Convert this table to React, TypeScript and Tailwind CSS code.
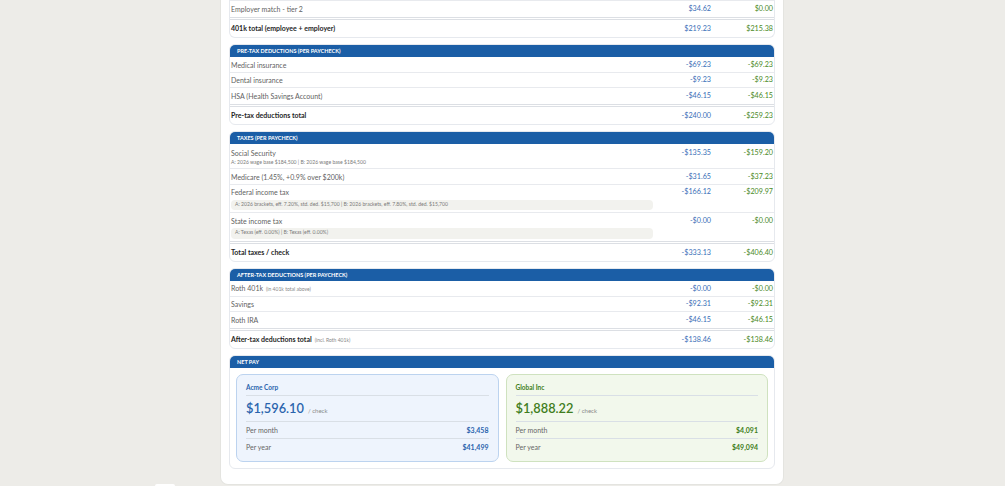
import React from "react";

const F = { fontFamily: 'Lato, "Open Sans", Arial, sans-serif' };

type Row = {
  label: string;
  small?: string;
  note?: string;
  pill?: string;
  a: string;
  b: string;
};

function Header({ title }: { title: string }) {
  return (
    <div className="h-[12.5px] bg-[#1b5ea6] rounded-t-[5px] flex items-center pl-[7px] pt-[0.5px] text-white font-bold text-[5.5px] uppercase">
      {title}
    </div>
  );
}

function Vals({ a, b, top }: { a: string; b: string; top?: boolean }) {
  return (
    <>
      <div className={`w-[59px] text-right text-[7.2px] leading-[10px] text-[#3a6fb7] pr-[2px] ${top ? "self-start" : ""}`}>{a}</div>
      <div className={`w-[61px] text-right text-[7.2px] leading-[10px] text-[#4a8a26] pr-[1px] ${top ? "self-start" : ""}`}>{b}</div>
    </>
  );
}

function DataRow({ r, last }: { r: Row; last?: boolean }) {
  const border = last ? "" : "border-b border-[#e8eaee]";
  if (r.note) {
    return (
      <div className={`flex pt-[4px] pb-[2px] ${border}`}>
        <div className="flex-1 min-w-0 pl-[1px]">
          <div className="text-[7px] leading-[10px] text-[#5f5f5f]">{r.label}</div>
          <div className="text-[5.1px] leading-[8px] text-[#7a7a7a]">{r.note}</div>
        </div>
        <Vals a={r.a} b={r.b} top />
      </div>
    );
  }
  if (r.pill) {
    return (
      <div className={`flex pt-[2.5px] pb-[2px] ${border}`}>
        <div className="flex-1 min-w-0 pl-[1px]">
          <div className="text-[7px] leading-[10px] text-[#5f5f5f]">{r.label}</div>
          <div className="mt-[2.5px] h-[10.5px] bg-[#f2f2ee] rounded-[4px] flex items-center pl-[4px] text-[5.1px] text-[#7a7a7a] mr-[1px]">
            {r.pill}
          </div>
        </div>
        <Vals a={r.a} b={r.b} top />
      </div>
    );
  }
  return (
    <div className={`flex items-center h-[15.5px] pt-[1px] ${border}`}>
      <div className="flex-1 min-w-0 pl-[1px] text-[7px] leading-[10px] text-[#5f5f5f]">
        {r.label}
        {r.small && <span className="text-[5px] text-[#888] ml-[3px]">{r.small}</span>}
      </div>
      <Vals a={r.a} b={r.b} />
    </div>
  );
}

function TotalRow({ label, small, a, b }: { label: string; small?: string; a: string; b: string }) {
  return (
    <div className="border-t-[3px] border-double border-[#dcdfe4] h-[20px] pt-[1px] flex items-center">
      <div className="flex-1 pl-[1px] text-[7px] font-bold text-[#262626]">
        {label}
        {small && <span className="text-[5px] font-normal text-[#888] ml-[3px]">{small}</span>}
      </div>
      <Vals a={a} b={b} />
    </div>
  );
}

function Section({
  title,
  rows,
  total,
}: {
  title: string;
  rows: Row[];
  total: { label: string; small?: string; a: string; b: string };
}) {
  return (
    <div className="border border-[#e6e9ee] rounded-[6px] bg-white">
      <Header title={title} />
      {rows.map((r, i) => (
        <DataRow key={i} r={r} last={i === rows.length - 1} />
      ))}
      <TotalRow {...total} />
    </div>
  );
}

function NetCard({
  name,
  amount,
  month,
  year,
  green,
}: {
  name: string;
  amount: string;
  month: string;
  year: string;
  green?: boolean;
}) {
  const c = green ? "text-[#3f7d20]" : "text-[#2a64ad]";
  return (
    <div
      className={`flex-1 rounded-[7px] border px-[9px] pt-[6px] pb-[6px] ${
        green ? "bg-[#f2f8ec] border-[#cfe2bf]" : "bg-[#eef4fd] border-[#bcd3ef]"
      }`}
    >
      <div className={`text-[6.5px] font-bold ${c} h-[15px] flex items-center border-b border-[#d9dfe6]`}>{name}</div>
      <div className="h-[26px] flex items-center border-b border-[#d9dfe6]">
        <span className={`text-[12.8px] font-semibold ${c}`}>{amount}</span>
        <span className="text-[6px] text-[#888] ml-[4px] mt-[3px]">/ check</span>
      </div>
      <div className="h-[16.5px] pt-[1px] flex items-center justify-between border-b border-[#d9dfe6] text-[7px]">
        <span className="text-[#666]">Per month</span>
        <span className={`font-bold ${c}`}>{month}</span>
      </div>
      <div className="h-[16.5px] pt-[1px] flex items-center justify-between text-[7px]">
        <span className="text-[#666]">Per year</span>
        <span className={`font-bold ${c}`}>{year}</span>
      </div>
    </div>
  );
}

export default function App() {
  return (
    <div style={F} className="w-[1005px] h-[486px] bg-[#edece8] overflow-hidden relative">
      <div className="absolute left-[155px] top-[484px] w-[20px] h-[4px] bg-white rounded-t-[2px]" />
      <div className="ml-[220px] w-[564px] h-[485px] bg-white rounded-b-[8px] border-x border-b border-[#e4e4e0] px-[8px]">
        {/* 401k section tail */}
        <div className="border-x border-b border-[#e6e9ee] rounded-b-[6px] bg-white">
          <div className="border-t border-[#e8eaee]">
            <div className="h-[15.5px] pt-[1px] flex items-center">
              <div className="flex-1 pl-[1px] text-[7px] text-[#5f5f5f]">Employer match - tier 2</div>
              <Vals a="$34.62" b="$0.00" />
            </div>
          </div>
          <TotalRow label="401k total (employee + employer)" a="$219.23" b="$215.38" />
        </div>

        <div className="flex flex-col gap-[6px] mt-[6px]">
          <Section
            title="Pre-tax deductions (per paycheck)"
            rows={[
              { label: "Medical insurance", a: "-$69.23", b: "-$69.23" },
              { label: "Dental insurance", a: "-$9.23", b: "-$9.23" },
              { label: "HSA (Health Savings Account)", a: "-$46.15", b: "-$46.15" },
            ]}
            total={{ label: "Pre-tax deductions total", a: "-$240.00", b: "-$259.23" }}
          />
          <Section
            title="Taxes (per paycheck)"
            rows={[
              {
                label: "Social Security",
                note: "A: 2026 wage base $184,500 | B: 2026 wage base $184,500",
                a: "-$135.35",
                b: "-$159.20",
              },
              { label: "Medicare (1.45%, +0.9% over $200k)", a: "-$31.65", b: "-$37.23" },
              {
                label: "Federal income tax",
                pill: "A: 2026 brackets, eff. 7.20%, std. ded. $15,700 | B: 2026 brackets, eff. 7.80%, std. ded. $15,700",
                a: "-$166.12",
                b: "-$209.97",
              },
              {
                label: "State income tax",
                pill: "A: Texas (eff. 0.00%) | B: Texas (eff. 0.00%)",
                a: "-$0.00",
                b: "-$0.00",
              },
            ]}
            total={{ label: "Total taxes / check", a: "-$333.13", b: "-$406.40" }}
          />
          <Section
            title="After-tax deductions (per paycheck)"
            rows={[
              { label: "Roth 401k", small: "(in 401k total above)", a: "-$0.00", b: "-$0.00" },
              { label: "Savings", a: "-$92.31", b: "-$92.31" },
              { label: "Roth IRA", a: "-$46.15", b: "-$46.15" },
            ]}
            total={{ label: "After-tax deductions total", small: "(incl. Roth 401k)", a: "-$138.46", b: "-$138.46" }}
          />
          <div className="border border-[#e6e9ee] rounded-[6px] bg-white">
            <Header title="Net pay" />
            <div className="flex gap-[7px] px-[6px] pt-[6px] pb-[6px]">
              <NetCard name="Acme Corp" amount="$1,596.10" month="$3,458" year="$41,499" />
              <NetCard name="Global Inc" amount="$1,888.22" month="$4,091" year="$49,094" green />
            </div>
          </div>
        </div>
      </div>
    </div>
  );
}
